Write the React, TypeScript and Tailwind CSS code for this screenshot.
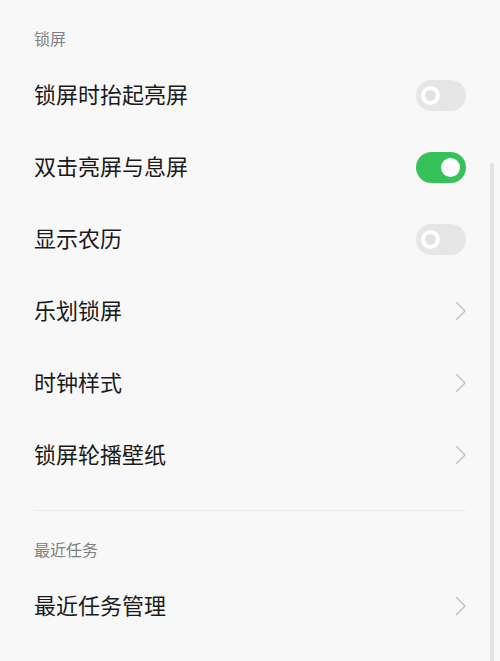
type Row =
  | { label: string; kind: 'toggle'; on: boolean }
  | { label: string; kind: 'link' }

const lockRows: Row[] = [
  { label: '锁屏时抬起亮屏', kind: 'toggle', on: false },
  { label: '双击亮屏与息屏', kind: 'toggle', on: true },
  { label: '显示农历', kind: 'toggle', on: false },
  { label: '乐划锁屏', kind: 'link' },
  { label: '时钟样式', kind: 'link' },
  { label: '锁屏轮播壁纸', kind: 'link' },
]

function Toggle({ on }: { on: boolean }) {
  if (on) {
    return (
      <div className="w-[50px] h-[31px] rounded-full bg-[#37c15b] flex items-center justify-end pr-[6px]">
        <div className="w-[19px] h-[19px] rounded-full bg-white" />
      </div>
    )
  }
  return (
    <div className="w-[50px] h-[31px] rounded-full bg-[#e6e6e6] flex items-center pl-[5px]">
      <div className="w-[19px] h-[19px] rounded-full border-[4px] border-white bg-[#e3e3e3]" />
    </div>
  )
}

function Chevron() {
  return (
    <svg width="12" height="20" viewBox="0 0 12 20" fill="none" className="mr-[-1px]">
      <path d="M1.5 1.5 L10 10 L1.5 18.5" stroke="#c4c4c4" strokeWidth="1.5" strokeLinecap="round" strokeLinejoin="round" />
    </svg>
  )
}

function SettingRow({ row }: { row: Row }) {
  return (
    <div className="h-[72px] flex items-center justify-between">
      <span className="text-[22px] text-[#1a1a1a] leading-none mb-[4px]">{row.label}</span>
      {row.kind === 'toggle' ? <Toggle on={row.on} /> : <Chevron />}
    </div>
  )
}

export default function App() {
  return (
    <div
      className="relative w-[500px] h-[661px] overflow-hidden bg-[#f8f8f8] px-[34px]"
      style={{ fontFamily: '"Noto Sans CJK SC", "Noto Sans", sans-serif' }}
    >
      <div className="mt-[27px] mb-[10px] h-[22px] flex items-center text-[16px] text-[#808080]">锁屏</div>
      {lockRows.map((r) => (
        <SettingRow key={r.label} row={r} />
      ))}
      <div className="mt-[19px] h-px bg-[#ebebeb]" />
      <div className="mt-[27px] mb-[10px] h-[22px] flex items-center text-[16px] text-[#808080]">最近任务</div>
      <SettingRow row={{ label: '最近任务管理', kind: 'link' }} />

      <div className="absolute left-[490px] top-[163px] w-[4px] h-[520px] rounded-full bg-[#e2e2e2]" />
    </div>
  )
}
